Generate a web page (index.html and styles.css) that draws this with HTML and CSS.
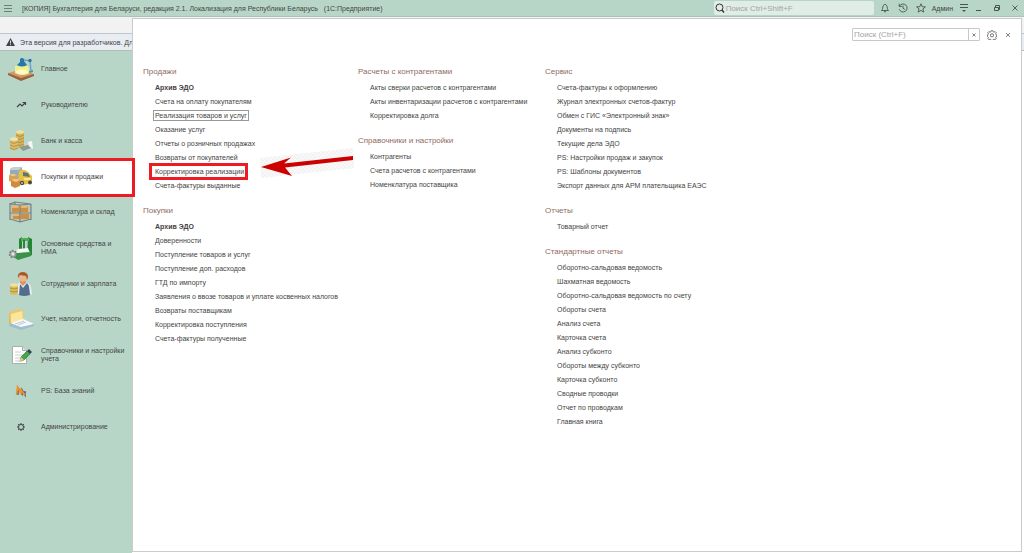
FILE: index.html
```html
<!DOCTYPE html>
<html lang="ru">
<head>
<meta charset="utf-8">
<title>Бухгалтерия для Беларуси</title>
<link rel="stylesheet" href="styles.css">
</head>
<body>
<div class="app">
  <header class="titlebar">
    <button class="icon-btn menu-btn" aria-label="Меню"><svg width="8" height="8" viewBox="0 0 8 8"><path d="M0 1.500h8M0 4.500h8M0 7.500h8" stroke="#6b8076" stroke-width="1"/></svg></button>
    <h1 class="title">[КОПИЯ] Бухгалтерия для Беларуси, редакция 2.1. Локализация для Республики Беларусь &nbsp; (1С:Предприятие)</h1>
    <label class="global-search">
      <svg width="10" height="10" viewBox="0 0 10 10" fill="none" stroke="#333"><circle cx="4.500" cy="4.500" r="3.500"/><path d="M7 7l2 2.500" stroke-width="1.400"/></svg>
      <input type="text" placeholder="Поиск Ctrl+Shift+F" aria-label="Поиск">
    </label>
    <div class="tools">
      <button class="icon-btn" aria-label="Уведомления"><svg width="10" height="10" viewBox="0 0 10 10" fill="none" stroke="#46544c" stroke-width=".9"><path d="M1.500 7.500C3 6.500 2.500 4 3.200 2.800Q5-.2 6.800 2.800C7.500 4 7 6.500 8.500 7.500ZM4 8.300q1 1.600 2 0"/></svg></button>
      <button class="icon-btn" aria-label="История"><svg width="10" height="10" viewBox="0 0 10 10" fill="none" stroke="#46544c" stroke-width=".9"><path d="M1.500 3.200A4 4 0 1 1 1.300 6.300M1.200.8v2.600h2.600M5 2.600v2.600l1.800 1.200"/></svg></button>
      <button class="icon-btn" aria-label="Избранное"><svg width="10" height="10" viewBox="0 0 10 10" fill="none" stroke="#46544c" stroke-width=".9"><path d="M5 .8l1.200 2.900 3.200.2-2.500 2 .9 3.200L5 7.400 2.200 9.100l.9-3.200L.6 3.900l3.200-.2z"/></svg></button>
      <button class="user">Админ</button>
      <button class="icon-btn" aria-label="Сервис"><svg width="10" height="10" viewBox="0 0 10 10"><path d="M1 1.500h8M1 4.500h8" stroke="#46544c"/><path d="M3 7h4L5 9z" fill="#46544c"/></svg></button>
    </div>
    <div class="window-buttons">
      <button class="icon-btn" aria-label="Свернуть"><svg width="8" height="8" viewBox="0 0 8 8"><path d="M1 6.500h5" stroke="#46544c"/></svg></button>
      <button class="icon-btn" aria-label="Восстановить"><svg width="8" height="8" viewBox="0 0 8 8" fill="none" stroke="#46544c"><path d="M1.500 3.500h4v3h-4zM2.500 3V1.500h4v4H6"/></svg></button>
      <button class="icon-btn" aria-label="Закрыть"><svg width="8" height="8" viewBox="0 0 8 8"><path d="M1.500 1.500l5 5M6.500 1.500l-5 5" stroke="#46544c" stroke-width=".9"/></svg></button>
    </div>
  </header>
  <div class="tabstrip"></div>
  <div class="notice"><svg width="9" height="8" viewBox="0 0 9 8"><path d="M4.500 0L9 8H0z" fill="#444"/><path d="M4.500 2.500v3M4.500 6.200v1" stroke="#e8edf4" stroke-width=".9"/></svg><span>Эта версия для разработчиков. Для</span></div>

  <div class="side">
  <nav class="sections">
    <a class="section" href="#"><svg class="pic" width="28" height="24" viewBox="0 0 28 24"><path d="M1 16l15-4 11 5-13 6z" fill="#d19a6b"/><path d="M1 16l13 5 13-4v2l-13 5L1 18z" fill="#9b6238"/><path d="M8 9h13l2 7q-8 4-15 0z" fill="#f3f08b"/><ellipse cx="15" cy="15" rx="6" ry="2.500" fill="#fdfbc4"/><path d="M10 8l3-3V2q2-2 4 0v2l3 4q-5 3-10 0z" fill="#2877a9"/><path d="M17 3l6 1 1 10" fill="none" stroke="#6ca5c1" stroke-width="1.500"/><circle cx="23" cy="3.500" r="1.700" fill="#2877a9"/><path d="M22 14l4-1v2l-4 1z" fill="#5594b3"/></svg><span>Главное</span></a>
    <a class="section" href="#"><svg class="pic" width="28" height="24" viewBox="0 0 28 24"><path d="M10 14l3-3 2 2 3-3M15.500 9.500H18.500V12" fill="none" stroke="#444" stroke-width="1.200"/></svg><span>Руководителю</span></a>
    <a class="section" href="#"><svg class="pic" width="28" height="24" viewBox="0 0 28 24"><path d="M16 14l9-3 1 8-6 3z" fill="#c6d4ce"/><path d="M21 13l4-1 1 8-4-2z" fill="#f5f7f6"/><path d="M9 3h8v16H9z" fill="#d3b45e"/><ellipse cx="13" cy="3" rx="4" ry="1.800" fill="#f2dea0"/><path d="M9 6q4 3 8 0M9 9q4 3 8 0M9 12q4 3 8 0M9 15q4 3 8 0" fill="none" stroke="#a18437" stroke-width=".7"/><path d="M3 10h8v10q-4 3-8 0z" fill="#d9bd6d"/><ellipse cx="7" cy="10" rx="4" ry="1.800" fill="#f4e3ad"/><path d="M3 13q4 3 8 0M3 16q4 3 8 0M3 19q4 3 8 0" fill="none" stroke="#a18437" stroke-width=".7"/><path d="M12 18l9-2 3 3-8 3z" fill="#8e9b8e"/></svg><span>Банк и касса</span></a>
    <a class="section active" href="#" aria-current="page"><svg class="pic" width="28" height="24" viewBox="0 0 28 24"><path d="M3 4l4-2h8v12H3z" fill="#94acb8"/><path d="M3 4l4-2h8l-3 3H3z" fill="#c3d1d7"/><path d="M12 6q5-3 9 1l4 4v7l-10 2-4-4z" fill="#e8c044"/><path d="M16 7l5 1 2 4-7-1z" fill="#5b7480"/><path d="M17 13h7l-1 2h-6z" fill="#fae793"/><circle cx="15" cy="18" r="2.200" fill="#494949"/><circle cx="23" cy="17.500" r="2" fill="#494949"/><circle cx="15" cy="18" r=".9" fill="#ccc"/><path d="M2 10l4-1 4 1v6l-5 1-3-1z" fill="#d9a154"/><path d="M4 15l4-1 5 1v6l-5 2-4-2z" fill="#d18b3d"/><path d="M4 15l4-1 5 1-4 2z" fill="#f2c98c"/><path d="M2 10l4-1 4 1-4 1z" fill="#f4d197"/></svg><span>Покупки и продажи</span></a>
    <a class="section" href="#"><svg class="pic" width="28" height="24" viewBox="0 0 28 24"><path d="M4 5l17-2 3 3v13l-9 3-11-4z" fill="#b9bbb0" opacity=".6"/><path d="M5 6h7v6H5zM13 6h8v6h-8zM6 14h7v5H6zM14 14h8v5h-8z" fill="#cf8f3f"/><path d="M5 6h7l-1 2H5zM13 6h8l-1 2h-7zM6 14h7l-1 2H6z" fill="#ebb66c"/><path d="M3 3v17M8 2v3M13 5v17M24 4v16M3 4l10 1 11-1M3 13h21M3 19l10 3 11-3M3 4l5-2 16 2" fill="none" stroke="#7c817d" stroke-width="1.200"/></svg><span>Номенклатура и склад</span></a>
    <a class="section" href="#"><svg class="pic" width="28" height="24" viewBox="0 0 28 24"><path d="M12 3l3-2v13l-3 1zM21 1l4 2v16l-5 2z" fill="#268437"/><path d="M14 2h8v3h-8z" fill="#4cad55"/><path d="M16 4h2v9h-2z" fill="#347f41"/><path d="M7 14l13-1 4 4-12 5-5-3z" fill="#dce8df"/><path d="M8 17l16-1v4l-13 4-3-2z" fill="#39924a"/><path d="M11 13l10-1 1 3-12 2z" fill="#f4f8f4"/><circle cx="6" cy="18" r="3.500" fill="#9aa19d"/><circle cx="6" cy="18" r="3.500" fill="none" stroke="#727975" stroke-width="1.500" stroke-dasharray="1.500 1.500"/><circle cx="6" cy="18" r="1.700" fill="#e2e7e4"/></svg><span>Основные средства и НМА</span></a>
    <a class="section" href="#"><svg class="pic" width="28" height="24" viewBox="0 0 28 24"><path d="M10 14q1-4 6-4 6 0 8 5l1 7q-8 3-14 0z" fill="#e6edf4"/><path d="M13 12l3 4 4-5 2 3 1 9q-6 2-11 0z" fill="#536d8e"/><path d="M13 8h6v3l-3 3-3-3z" fill="#d9956a"/><circle cx="16" cy="5.500" r="4" fill="#edb68a"/><path d="M11 6q-1-5 4-6 6 0 6 5l-1 3-1-4-6-1z" fill="#a5592b"/><path d="M3 13h8v9q-4 2-8 0z" fill="#d9bd5f"/><ellipse cx="7" cy="13" rx="4" ry="1.700" fill="#f2e19c"/><path d="M3 16q4 2 8 0M3 19q4 2 8 0" fill="none" stroke="#9e8334" stroke-width=".7"/></svg><span>Сотрудники и зарплата</span></a>
    <a class="section" href="#"><svg class="pic" width="28" height="24" viewBox="0 0 28 24"><path d="M2 5l11-3 3 2 1 10-13 2z" fill="#eec863"/><path d="M4 7l11-3 1 9-12 3z" fill="#fae69c"/><path d="M4 16l12-4 11 5-14 5z" fill="#f8fafb"/><path d="M3 16l11 4 13-3v2l-13 4-12-4z" fill="#9ebdd1"/><path d="M8 17l9-3M11 18l8-3" stroke="#a9bac6" stroke-width=".8"/><path d="M2 5l2 11-2 2z" fill="#e3b859"/></svg><span>Учет, налоги, отчетность</span></a>
    <a class="section" href="#"><svg class="pic" width="28" height="24" viewBox="0 0 28 24"><path d="M5.500 3.500h10l4 4v13h-14z" fill="#fff" stroke="#a7b0aa"/><path d="M15.500 3.500v4h4" fill="#dfe5e1" stroke="#a7b0aa"/><path d="M8 9h6M8 12h8M8 15h5M8 18h7" stroke="#c9cecb"/><path d="M14 14l6-6 3 3-6 6-4 1z" fill="#47a64d" stroke="#286d30" stroke-width=".6"/><path d="M20 8l2-2 3 3-2 2z" fill="#374253"/><path d="M14 14l3 3-4.500 1.500z" fill="#ecc687"/></svg><span>Справочники и настройки учета</span></a>
    <a class="section" href="#"><svg class="pic" width="28" height="24" viewBox="0 0 28 24"><path d="M11 16V9l4 6v-4l3 5v-4" fill="none" stroke="#595878" stroke-width="1.500"/><path d="M9.500 16l1-8 3.500 7v-4l4 5" fill="none" stroke="#f29423" stroke-width="1.600"/></svg><span>PS: База знаний</span></a>
    <a class="section" href="#"><svg class="pic" width="28" height="24" viewBox="0 0 28 24"><circle cx="14" cy="12" r="2.500" fill="none" stroke="#444" stroke-width="1"/><path d="M14 8v1.500M14 14.500V16M10 12h1.500M16.500 12H18M11.200 9.200l1 1M15.800 13.800l1 1M16.800 9.200l-1 1M12.200 13.800l-1 1" stroke="#444" stroke-width="1.100"/></svg><span>Администрирование</span></a>
  </nav>
  </div>

  <main class="panel">
    <div class="panel-tools">
      <div class="panel-search"><input type="text" placeholder="Поиск (Ctrl+F)" aria-label="Поиск в разделе"><button aria-label="Очистить"><svg width="4" height="4" viewBox="0 0 4 4"><path d="M.5.5l3 3M3.500.5l-3 3" stroke="#777" stroke-width=".9"/></svg></button></div>
      <button class="icon-btn" aria-label="Настройка"><svg width="10" height="10" viewBox="0 0 10 10" fill="none" stroke="#666" stroke-width=".9"><path d="M4.200.6h1.600l.3 1.200 1 .4 1.100-.6 1 1-.6 1.200.4.900 1 .3v1.400l-1 .3-.4.900.6 1.100-1 1-1.100-.6-1 .4-.3 1H4.200l-.3-1-1-.4-1.100.6-1-1 .6-1.100-.4-.9-.6-.3V5l.6-.3.4-.9-.6-1.200 1-1 1.100.6 1-.4z"/><circle cx="5" cy="5.300" r="1.600"/></svg></button>
      <button class="icon-btn" aria-label="Закрыть панель"><svg width="6" height="6" viewBox="0 0 6 6"><path d="M1 1l4 4M5 1L1 5" stroke="#777" stroke-width=".9"/></svg></button>
    </div>
    <div class="columns">
      <div class="column">
        <section><h2>Продажи</h2><ul>
          <li><a class="strong" href="#">Архив ЭДО</a></li>
          <li><a href="#">Счета на оплату покупателям</a></li>
          <li><a class="focused" href="#">Реализация товаров и услуг</a></li>
          <li><a href="#">Оказание услуг</a></li>
          <li><a href="#">Отчеты о розничных продажах</a></li>
          <li><a href="#">Возвраты от покупателей</a></li>
          <li><a class="marked" href="#">Корректировка реализации<svg class="arrow" width="94" height="34" viewBox="0 0 94 34"><defs><pattern id="mesh" width="4" height="4" patternUnits="userSpaceOnUse"><path d="M0 0h2v2H0zM2 2h2v2H2z" fill="#f3f3f3"/></pattern></defs><path d="M0 12L93 2l1 20L1 32z" fill="#f8f8f8"/><path d="M0 12L93 2l1 20L1 32z" fill="url(#mesh)"/><path d="M1 21L31 11.500 24 17.500 93 10v4L25 21.500 32 30z" fill="#cc0000"/></svg></a></li>
          <li><a href="#">Счета-фактуры выданные</a></li>
        </ul></section>
        <section><h2>Покупки</h2><ul>
          <li><a class="strong" href="#">Архив ЭДО</a></li>
          <li><a href="#">Доверенности</a></li>
          <li><a href="#">Поступление товаров и услуг</a></li>
          <li><a href="#">Поступление доп. расходов</a></li>
          <li><a href="#">ГТД по импорту</a></li>
          <li><a href="#">Заявления о ввозе товаров и уплате косвенных налогов</a></li>
          <li><a href="#">Возвраты поставщикам</a></li>
          <li><a href="#">Корректировка поступления</a></li>
          <li><a href="#">Счета-фактуры полученные</a></li>
        </ul></section>
      </div>
      <div class="column">
        <section><h2>Расчеты с контрагентами</h2><ul>
          <li><a href="#">Акты сверки расчетов с контрагентами</a></li>
          <li><a href="#">Акты инвентаризации расчетов с контрагентами</a></li>
          <li><a href="#">Корректировка долга</a></li>
        </ul></section>
        <section><h2>Справочники и настройки</h2><ul>
          <li><a href="#">Контрагенты</a></li>
          <li><a href="#">Счета расчетов с контрагентами</a></li>
          <li><a href="#">Номенклатура поставщика</a></li>
        </ul></section>
      </div>
      <div class="column">
        <section><h2>Сервис</h2><ul>
          <li><a href="#">Счета-фактуры к оформлению</a></li>
          <li><a href="#">Журнал электронных счетов-фактур</a></li>
          <li><a href="#">Обмен с ГИС «Электронный знак»</a></li>
          <li><a href="#">Документы на подпись</a></li>
          <li><a href="#">Текущие дела ЭДО</a></li>
          <li><a href="#">PS: Настройки продаж и закупок</a></li>
          <li><a href="#">PS: Шаблоны документов</a></li>
          <li><a href="#">Экспорт данных для АРМ плательщика ЕАЭС</a></li>
        </ul></section>
        <section><h2>Отчеты</h2><ul>
          <li><a href="#">Товарный отчет</a></li>
        </ul></section>
        <section><h2>Стандартные отчеты</h2><ul>
          <li><a href="#">Оборотно-сальдовая ведомость</a></li>
          <li><a href="#">Шахматная ведомость</a></li>
          <li><a href="#">Оборотно-сальдовая ведомость по счету</a></li>
          <li><a href="#">Обороты счета</a></li>
          <li><a href="#">Анализ счета</a></li>
          <li><a href="#">Карточка счета</a></li>
          <li><a href="#">Анализ субконто</a></li>
          <li><a href="#">Обороты между субконто</a></li>
          <li><a href="#">Карточка субконто</a></li>
          <li><a href="#">Сводные проводки</a></li>
          <li><a href="#">Отчет по проводкам</a></li>
          <li><a href="#">Главная книга</a></li>
        </ul></section>
      </div>
    </div>
  </main>
</div>
</body>
</html>
```
FILE: styles.css
```css
* { box-sizing: border-box; }
body { margin: 0; font-family: "Liberation Sans", Arial, sans-serif; font-size: 7px; color: #444; background: #fff; }
a { color: inherit; text-decoration: none; }
button { padding: 0; border: 0; background: none; color: inherit; font: inherit; }
input { min-width: 0; padding: 0; border: 0; background: none; color: #444; font: inherit; outline: none; }
input::placeholder { color: #a3a3a3; opacity: 1; }
svg { display: block; flex: none; }

.app { position: relative; display: flex; flex-direction: column; min-height: 100vh; }

.titlebar { display: flex; align-items: center; height: 17px; padding: 0 5px 0 4px; background: #b8d6c8; border-bottom: 1px solid #a9c4b7; }
.icon-btn { display: grid; place-items: center; }
.title { flex: 1; margin: 0 0 0 10px; font-size: 7px; font-weight: 400; white-space: nowrap; color: #444; }
.global-search { display: flex; align-items: center; gap: 1px; width: 160px; height: 14px; padding-left: 1px; background: #e0ede6; border-radius: 2px; font-size: 8px; }
.global-search input { flex: 1; }
.tools { display: flex; align-items: center; gap: 8px; margin-left: 6px; }
.user { font-size: 7px; margin: 0 -2px; }
.window-buttons { display: flex; gap: 10px; margin-left: 6px; }

.tabstrip { height: 17px; background: #f2f2f2; border-bottom: 1px solid #c2c6c9; }
.notice { display: flex; align-items: center; gap: 5px; height: 17px; padding-left: 6px; background: #e8edf4; border-bottom: 1px solid #b5bcb8; font-size: 7px; white-space: nowrap; }

.side { flex: 1; width: 132px; background: #b8d6c8; }
.sections { display: grid; grid-auto-rows: 1fr; min-height: 393px; }
.section { display: flex; align-items: center; gap: 6px; padding: 1px 4px 0 7px; line-height: 8px; }
.section.active { position: relative; background: #fff; }
.section.active::after { content: ""; position: absolute; z-index: 3; inset: 0 -3px -3px 0; border: 3px solid #ed1c24; }

.panel { position: absolute; z-index: 2; inset: 18px 2px 1px 132px; background: #fff; border: 1px solid #c9cccb; }
.panel-tools { display: flex; align-items: center; justify-content: flex-end; gap: 7px; margin-top: 9px; padding-right: 9px; }
.panel-tools .icon-btn { min-width: 8px; }
.panel-search { display: flex; width: 128px; height: 13px; border: 1px solid #c8c8c8; border-radius: 1px; font-size: 8px; }
.panel-search input { flex: 1; padding-left: 1px; }
.panel-search button { display: grid; place-items: center; width: 11px; border-left: 1px solid #c8c8c8; }

.columns { display: grid; grid-template-columns: 215px 187px 1fr; padding: 24px 10px 0; }
.column { display: flex; flex-direction: column; gap: 11px; }
.column h2 { margin: 0 0 3px; font-size: 8px; font-weight: 400; line-height: 13px; color: #8f6b64; }
.column ul { margin: 0; padding: 0 0 0 12px; list-style: none; }
.column li { height: 14px; line-height: 14px; white-space: nowrap; }
.strong { font-weight: 700; }
.focused { outline: 1px solid #999; outline-offset: 1px; }
.marked { position: relative; }
.marked::after { content: ""; position: absolute; inset: -5px -4px -5px -6px; border: 3px solid #ed1c24; }
.arrow { position: absolute; left: 105px; top: -22px; }
```
